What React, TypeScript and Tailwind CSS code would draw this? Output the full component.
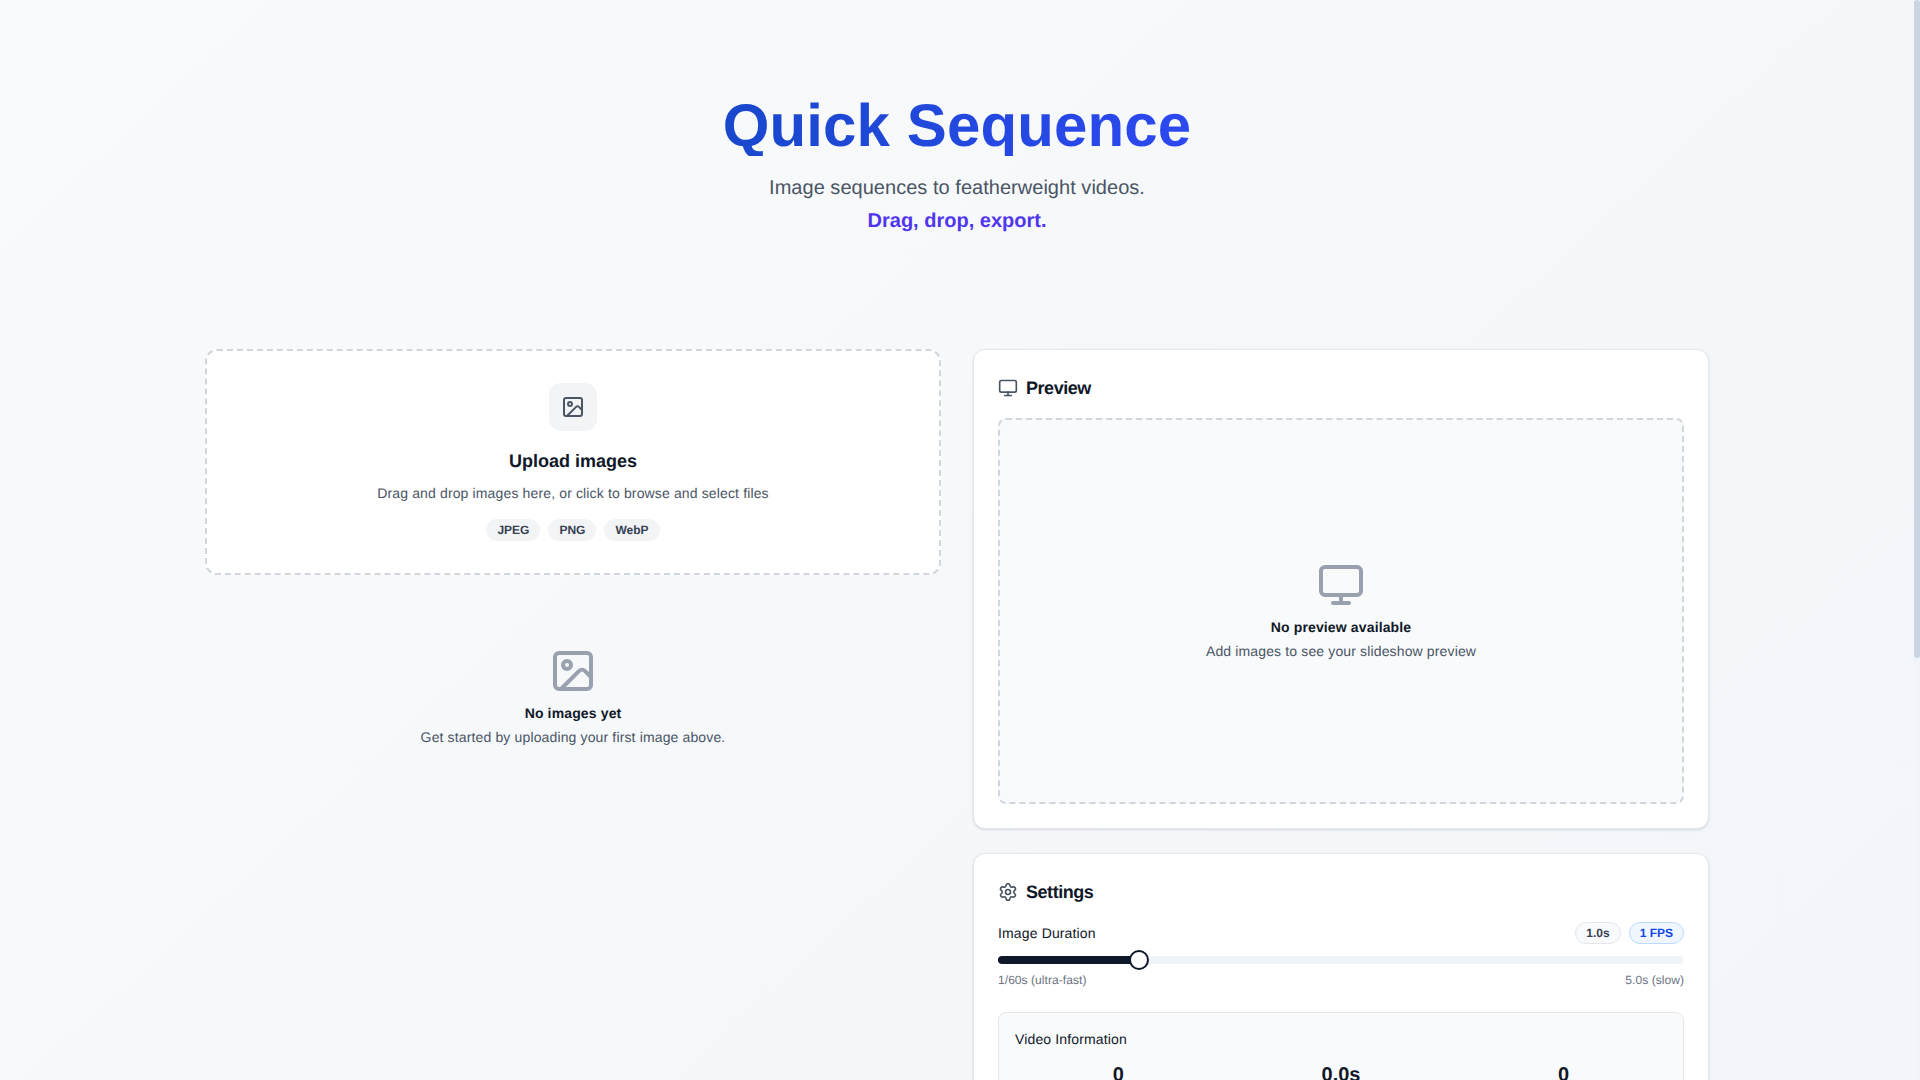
import * as Slider from '@radix-ui/react-slider';
import { Image, Monitor, Settings } from 'lucide-react';

const FORMATOS = ['JPEG', 'PNG', 'WebP'];

const RESUMEN = [
  { valor: '0', etiqueta: 'Images' },
  { valor: '0.0s', etiqueta: 'Duration' },
  { valor: '0', etiqueta: 'Frames' },
];

function EmptyState({ titulo, texto, children }: { titulo: string; texto: string; children: React.ReactNode }) {
  return (
    <div className="flex flex-col items-center text-center">
      {children}
      <p className="mt-2 text-sm font-semibold tracking-[0.14px] text-gray-900">{titulo}</p>
      <p className="mt-1 text-sm tracking-[0.14px] text-gray-600">{texto}</p>
    </div>
  );
}

export default function App() {
  return (
    <div className="flex h-screen overflow-hidden font-['Liberation_Sans',Arial,sans-serif] antialiased [text-rendering:geometricPrecision]">
      <main className="min-w-0 flex-1">
        <div className="min-h-[1772px] bg-gradient-to-br from-gray-50 to-slate-100">
          <div className="mx-auto max-w-screen-2xl px-4 pt-24">
            <header className="mb-[114px] text-center">
              <h1 className="inline-block bg-gradient-to-r from-[#1848cc] to-[#2c48f0] bg-clip-text text-6xl font-bold tracking-[0.13px] text-transparent">
                Quick Sequence
              </h1>
              <p className="mt-[18px] text-xl tracking-[0.03px] text-gray-600">Image sequences to featherweight videos.</p>
              <p className="mt-[5px] text-xl font-semibold text-[#4f35ee]">Drag, drop, export.</p>
            </header>

            <div className="grid grid-cols-2 items-start gap-8">
              <section>
                <div className="flex flex-col items-center rounded-xl border-2 border-dashed border-gray-300 bg-white p-8 text-center">
                  <div className="flex h-12 w-12 items-center justify-center rounded-xl bg-gray-100">
                    <Image className="h-6 w-6 text-gray-600" />
                  </div>
                  <h2 className="mt-4 text-lg font-semibold text-gray-900">Upload images</h2>
                  <p className="mt-2 text-sm tracking-[0.14px] text-gray-600">
                    Drag and drop images here, or click to browse and select files
                  </p>
                  <div className="mt-4 flex gap-2">
                    {FORMATOS.map((f) => (
                      <span key={f} className="rounded-full border border-transparent bg-gray-100 px-2.5 py-0.5 text-xs font-semibold text-gray-700">
                        {f}
                      </span>
                    ))}
                  </div>
                </div>

                <div className="mt-[72px]">
                  <EmptyState titulo="No images yet" texto="Get started by uploading your first image above.">
                    <Image className="h-12 w-12 text-gray-400" />
                  </EmptyState>
                </div>
              </section>

              <section className="flex flex-col gap-6">
                <div className="rounded-xl border border-gray-200 bg-white p-6 shadow-sm">
                  <div className="flex items-center gap-2">
                    <Monitor className="h-5 w-5 text-gray-600" />
                    <h2 className="text-lg font-semibold tracking-tight text-gray-900">Preview</h2>
                  </div>
                  <div className="mt-4 flex aspect-video items-center justify-center rounded-lg border-2 border-dashed border-gray-300 bg-gray-50">
                    <EmptyState titulo="No preview available" texto="Add images to see your slideshow preview">
                      <Monitor className="h-12 w-12 text-gray-400" />
                    </EmptyState>
                  </div>
                </div>

                <div className="rounded-xl border border-gray-200 bg-white p-6 shadow-sm">
                  <div className="flex items-center gap-2">
                    <Settings className="h-5 w-5 text-gray-600" />
                    <h2 className="text-lg font-semibold tracking-tight text-gray-900">Settings</h2>
                  </div>

                  <div className="mt-4 flex items-center justify-between">
                    <span className="text-sm font-medium tracking-[0.14px] text-gray-900">Image Duration</span>
                    <div className="flex gap-2">
                      <span className="rounded-full border border-gray-200 bg-gray-50 px-2.5 py-0.5 text-xs font-semibold text-gray-700">
                        1.0s
                      </span>
                      <span className="rounded-full border border-blue-200 bg-blue-50 px-2.5 py-0.5 text-xs font-semibold text-blue-700">
                        1 FPS
                      </span>
                    </div>
                  </div>

                  <Slider.Root
                    defaultValue={[1]}
                    min={1 / 60}
                    max={5}
                    step={0.01}
                    className="relative mt-1.5 flex h-5 w-full touch-none select-none items-center"
                  >
                    <Slider.Track className="relative h-2 w-full grow overflow-hidden rounded-full bg-slate-100">
                      <Slider.Range className="absolute h-full bg-slate-900" />
                    </Slider.Track>
                    <Slider.Thumb className="block h-5 w-5 rounded-full border-2 border-slate-900 bg-white" />
                  </Slider.Root>

                  <div className="mt-0.5 flex justify-between text-xs tracking-[0.06px] text-gray-500">
                    <span>1/60s (ultra-fast)</span>
                    <span>5.0s (slow)</span>
                  </div>

                  <div className="mt-6 rounded-lg border border-gray-200 bg-gray-50 p-4">
                    <h3 className="text-sm font-medium tracking-[0.14px] text-gray-900">Video Information</h3>
                    <div className="mt-3 grid grid-cols-3 gap-4 text-center">
                      {RESUMEN.map((r) => (
                        <div key={r.etiqueta}>
                          <div className="text-xl font-bold text-gray-900">{r.valor}</div>
                          <div className="text-xs text-gray-500">{r.etiqueta}</div>
                        </div>
                      ))}
                    </div>
                  </div>
                </div>
              </section>
            </div>
          </div>
        </div>
      </main>

      {/* barra de desplazamiento: en la captura no se pinta la nativa */}
      <aside className="w-1.5 shrink-0 bg-slate-100">
        <div className="h-[658px] rounded-full bg-slate-300" />
      </aside>
    </div>
  );
}
